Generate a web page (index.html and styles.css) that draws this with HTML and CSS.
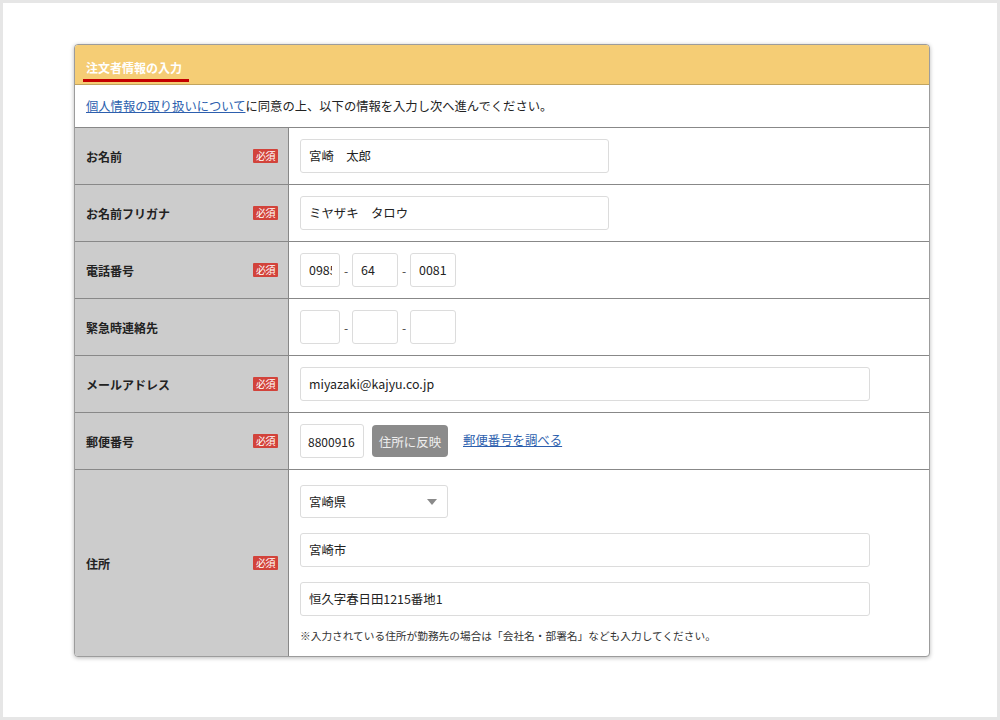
FILE: index.html
```html
<!DOCTYPE html>
<html lang="ja">
<head>
<meta charset="utf-8">
<title>注文者情報の入力</title>
<link rel="stylesheet" href="styles.css">
</head>
<body>
<div class="frame">
  <section class="card">
    <header class="card-head"><h2 class="card-title">注文者情報の入力</h2></header>
    <p class="intro"><a href="#" class="link">個人情報の取り扱いについて</a>に同意の上、以下の情報を入力し次へ進んでください。</p>

    <div class="row">
      <div class="label"><span>お名前</span><span class="req">必須</span></div>
      <div class="value"><input class="field w-name" type="text" value="宮崎　太郎"></div>
    </div>
    <div class="row">
      <div class="label"><span>お名前フリガナ</span><span class="req">必須</span></div>
      <div class="value"><input class="field w-name" type="text" value="ミヤザキ　タロウ"></div>
    </div>
    <div class="row">
      <div class="label"><span>電話番号</span><span class="req">必須</span></div>
      <div class="value">
        <input class="field w-t1" type="text" value="0985"><span class="dash">-</span><input class="field w-t2" type="text" value="64"><span class="dash">-</span><input class="field w-t3" type="text" value="0081">
      </div>
    </div>
    <div class="row">
      <div class="label"><span>緊急時連絡先</span></div>
      <div class="value">
        <input class="field w-t1" type="text" value=""><span class="dash">-</span><input class="field w-t2" type="text" value=""><span class="dash">-</span><input class="field w-t3" type="text" value="">
      </div>
    </div>
    <div class="row">
      <div class="label"><span>メールアドレス</span><span class="req">必須</span></div>
      <div class="value"><input class="field w-wide" type="text" value="miyazaki@kajyu.co.jp"></div>
    </div>
    <div class="row">
      <div class="label"><span>郵便番号</span><span class="req">必須</span></div>
      <div class="value">
        <input class="field w-zip" type="text" value="8800916">
        <button class="btn" type="button">住所に反映</button>
        <a href="#" class="link zip-link">郵便番号を調べる</a>
      </div>
    </div>
    <div class="row row-last">
      <div class="label"><span>住所</span><span class="req">必須</span></div>
      <div class="value value-stack">
        <span class="select-wrap"><select class="select"><option>宮崎県</option></select></span>
        <input class="field w-wide" type="text" value="宮崎市">
        <input class="field w-wide" type="text" value="恒久字春日田1215番地1">
        <p class="note">※入力されている住所が勤務先の場合は「会社名・部署名」なども入力してください。</p>
      </div>
    </div>
  </section>
</div>
</body>
</html>
```

FILE: styles.css
```css
* { box-sizing: border-box; }
html, body { margin: 0; padding: 0; }
body {
  font-family: "Noto Sans CJK JP", "Noto Sans", sans-serif;
  color: #222;
  background: #fff;
}
.frame {
  width: 1000px;
  height: 720px;
  border: 3px solid #e6e6e6;
  padding: 41px 0 0 71px;
  background: #fff;
}
.card {
  width: 856px;
  border: 1px solid #9c9c9c;
  border-radius: 4px;
  box-shadow: 0 1px 4px rgba(0,0,0,0.28);
  background: #fff;
  overflow: hidden;
}
.card-head {
  height: 40px;
  background: #f5cd75;
  border-bottom: 1px solid #c2a45e;
  padding: 9px 0 0 8px;
}
.card-title {
  display: inline-block;
  margin: 0;
  font-size: 12px;
  font-weight: bold;
  color: #fff;
  line-height: 18px;
  padding: 0 7px 2px 3px;
  border-bottom: 3px solid #c40000;
}
.intro {
  margin: 0;
  height: 43px;
  border-bottom: 1px solid #888;
  padding: 0 11px;
  display: flex;
  align-items: center;
  font-size: 12.3px;
  color: #222;
}
.link { color: #2d5fae; text-decoration: underline; }
.row {
  display: grid;
  grid-template-columns: 214px 1fr;
  height: 57px;
  border-bottom: 1px solid #888;
}
.row-last { height: 186px; border-bottom: none; }
.label {
  background: #cccccc;
  border-right: 1px solid #888;
  display: flex;
  align-items: center;
  justify-content: space-between;
  padding: 0 10px 0 11px;
  font-size: 12px;
  font-weight: bold;
  color: #222;
}
.req {
  background: #d2433b;
  color: #fff;
  font-size: 10px;
  font-weight: normal;
  line-height: 14px;
  padding: 0 2px;
  width: 25px;
  text-align: center;
  border-radius: 1px;
  white-space: nowrap;
  letter-spacing: -0.5px;
}
.value {
  display: flex;
  align-items: center;
  padding-left: 11px;
}
.field {
  height: 34px;
  border: 1px solid #dcdcdc;
  border-radius: 3px;
  padding: 0 7px 0 8px;
  font-family: "Noto Sans CJK JP", "Noto Sans", sans-serif;
  font-size: 12.4px;
  color: #222;
  background: #fff;
  outline: none;
}
.w-name { width: 309px; }
.w-t1 { width: 40px; }
.w-t2 { width: 46px; }
.w-t3 { width: 46px; }
.w-wide { width: 570px; }
.w-zip { width: 64px; padding: 0 4px 0 7px; font-size: 12px; }
.dash {
  width: 12px;
  text-align: center;
  font-size: 12px;
  color: #444;
}
.btn {
  margin-left: 8px;
  width: 76px;
  height: 32px;
  border: none;
  border-radius: 4px;
  background: #8b8b8b;
  color: #eee;
  font-family: "Noto Sans CJK JP", "Noto Sans", sans-serif;
  font-size: 12.5px;
  padding: 0;
}
.zip-link {
  margin-left: 15px;
  font-size: 12.4px;
  margin-top: -2px;
}
.value-stack {
  flex-direction: column;
  align-items: flex-start;
  padding-top: 15px;
}
.select-wrap {
  position: relative;
  display: block;
  width: 148px;
  height: 33px;
  margin-bottom: 15px;
}
.select {
  appearance: none;
  -webkit-appearance: none;
  width: 148px;
  height: 33px;
  border: 1px solid #dcdcdc;
  border-radius: 3px;
  background: #fff;
  padding: 0 8px;
  font-family: "Noto Sans CJK JP", "Noto Sans", sans-serif;
  font-size: 12.4px;
  color: #222;
}
.select-wrap::after {
  content: "";
  position: absolute;
  right: 11px;
  top: 14px;
  border-left: 5px solid transparent;
  border-right: 5px solid transparent;
  border-top: 6px solid #8a8a8a;
}
.value-stack .field { margin-bottom: 15px; }
.note {
  margin: -3px 0 0;
  font-size: 10.7px;
  color: #333;
}
```
